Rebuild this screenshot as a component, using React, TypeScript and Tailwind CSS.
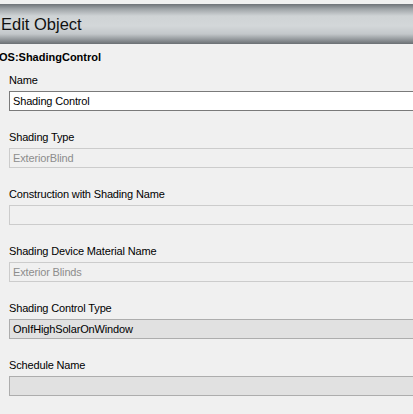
const fields = [
  { label: "Name", value: "Shading Control", kind: "edit" },
  { label: "Shading Type", value: "ExteriorBlind", kind: "disabled" },
  { label: "Construction with Shading Name", value: "", kind: "disabled" },
  { label: "Shading Device Material Name", value: "Exterior Blinds", kind: "disabled" },
  { label: "Shading Control Type", value: "OnIfHighSolarOnWindow", kind: "combo" },
  { label: "Schedule Name", value: "", kind: "combo" },
];

function boxClass(kind: string) {
  if (kind === "edit") return "bg-white border border-[#7a7a7a] text-black";
  if (kind === "combo") return "bg-[#e1e1e1] border border-[#adadad] text-black";
  return "bg-[#f0f0f0] border border-[#cccccc] text-[#8d8d8d]";
}

export default function App() {
  return (
    <div
      className="w-[413px] h-[414px] overflow-hidden bg-[#f0f0f0] text-[11px] leading-[14px] tracking-[-0.15px] text-black"
      style={{ fontFamily: '"Liberation Sans", Arial, sans-serif' }}
    >
      <div className="h-[4px]" />
      {/* header bar */}
      <div className="h-[40px] flex items-center pl-[1px] bg-[linear-gradient(to_bottom,#6e7378_0%,#9ea3a7_12%,#cfd3d5_30%,#d3d7d9_55%,#c3c7ca_75%,#8e9397_90%,#6a6f73_100%)]">
        <span className="text-[16.5px] leading-[22px] tracking-normal text-[#111]">Edit Object</span>
      </div>

      <div className="mt-[6px] h-[14px] font-bold -ml-[1px] tracking-normal">OS:ShadingControl</div>

      <div className="mt-[9px] w-[440px] pl-[9px]">
        {fields.map((f) => (
          <div key={f.label} className="mb-[19px]">
            <div className="h-[14px]">{f.label}</div>
            <div className={`mt-[4px] h-[20px] flex items-center pl-[3px] ${boxClass(f.kind)}`}>
              {f.value}
            </div>
          </div>
        ))}
      </div>
    </div>
  );
}
